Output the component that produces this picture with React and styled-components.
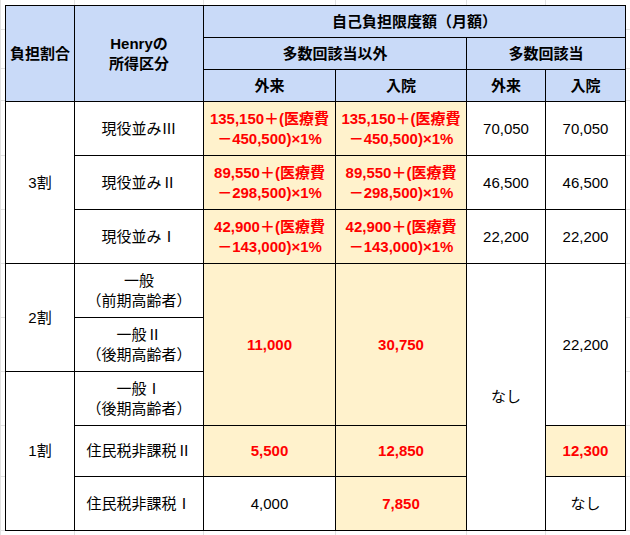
import styled, { createGlobalStyle } from 'styled-components';

const GlobalStyle = createGlobalStyle`
  html, body {
    margin: 0;
    padding: 0;
    background: #fff;
  }
  body {
    font-family: "Liberation Sans", Arial, "Noto Sans CJK JP", sans-serif;
  }
`;

const grid = '#e2e2e2';
const vLine = x => `linear-gradient(${grid}, ${grid}) ${x}px 0 / 1px 100% no-repeat`;
const hLine = y => `linear-gradient(${grid}, ${grid}) 0 ${y}px / 100% 1px no-repeat`;

const Sheet = styled.div`
  width: 630px;
  height: 535px;
  box-sizing: border-box;
  padding: 5px;
  background: ${[0, 74, 203, 335, 466, 545].map(vLine).join(', ')},
    ${[29, 68, 100, 155, 209, 263, 317, 371, 425, 476, 530].map(hLine).join(', ')};
`;

const Table = styled.table`
  width: 620px;
  border-collapse: collapse;
  table-layout: fixed;
  font-size: 15px;
  line-height: 20px;
  color: #000;
`;

const HeadRow = styled.tr`
  height: 32px;
`;

const Row = styled.tr`
  height: ${p => p.$h || 54}px;
`;

const HeadCell = styled.th`
  background: #c9daf8;
  border: 1px solid #000;
  font-weight: 700;
  text-align: center;
  vertical-align: middle;
  padding: 0 2px;
`;

const Cell = styled.td`
  background: ${p => (p.$yellow ? '#fff2cc' : '#fff')};
  color: ${p => (p.$red ? '#ff0000' : '#000')};
  font-weight: ${p => (p.$red ? 700 : 400)};
  border: 1px solid #000;
  text-align: center;
  vertical-align: middle;
  padding: 0 2px;
  white-space: nowrap;
`;

const widths = [69, 129, 132, 131, 79, 80];

const formula = (base, limit) => (
  <>
    {base}＋(医療費
    <br />
    －{limit})×1%
  </>
);

const upperRows = [
  { label: '現役並みⅢ', base: '135,150', limit: '450,500', cap: '70,050' },
  { label: '現役並みⅡ', base: '89,550', limit: '298,500', cap: '46,500' },
  { label: '現役並みⅠ', base: '42,900', limit: '143,000', cap: '22,200' },
];

const App = () => {
  return (
    <>
      <GlobalStyle />
      <Sheet>
        <Table>
          <colgroup>
            {widths.map((w, i) => (
              <col key={i} style={{ width: w }} />
            ))}
          </colgroup>
          <thead>
            <HeadRow>
              <HeadCell rowSpan={3}>負担割合</HeadCell>
              <HeadCell rowSpan={3}>
                Henryの
                <br />
                所得区分
              </HeadCell>
              <HeadCell colSpan={4}>自己負担限度額（月額）</HeadCell>
            </HeadRow>
            <HeadRow>
              <HeadCell colSpan={2}>多数回該当以外</HeadCell>
              <HeadCell colSpan={2}>多数回該当</HeadCell>
            </HeadRow>
            <HeadRow>
              <HeadCell>外来</HeadCell>
              <HeadCell>入院</HeadCell>
              <HeadCell>外来</HeadCell>
              <HeadCell>入院</HeadCell>
            </HeadRow>
          </thead>
          <tbody>
            {upperRows.map((r, i) => (
              <Row key={r.label}>
                {i === 0 && <Cell rowSpan={3}>3割</Cell>}
                <Cell>{r.label}</Cell>
                <Cell $yellow $red>{formula(r.base, r.limit)}</Cell>
                <Cell $yellow $red>{formula(r.base, r.limit)}</Cell>
                <Cell>{r.cap}</Cell>
                <Cell>{r.cap}</Cell>
              </Row>
            ))}
            <Row>
              <Cell rowSpan={2}>2割</Cell>
              <Cell>
                一般
                <br />
                （前期高齢者）
              </Cell>
              <Cell rowSpan={3} $yellow $red>11,000</Cell>
              <Cell rowSpan={3} $yellow $red>30,750</Cell>
              <Cell rowSpan={5}>なし</Cell>
              <Cell rowSpan={3}>22,200</Cell>
            </Row>
            <Row>
              <Cell>
                一般Ⅱ
                <br />
                （後期高齢者）
              </Cell>
            </Row>
            <Row>
              <Cell rowSpan={3}>1割</Cell>
              <Cell>
                一般Ⅰ
                <br />
                （後期高齢者）
              </Cell>
            </Row>
            <Row $h={51}>
              <Cell>住民税非課税Ⅱ</Cell>
              <Cell $yellow $red>5,500</Cell>
              <Cell $yellow $red>12,850</Cell>
              <Cell $yellow $red>12,300</Cell>
            </Row>
            <Row>
              <Cell>住民税非課税Ⅰ</Cell>
              <Cell>4,000</Cell>
              <Cell $yellow $red>7,850</Cell>
              <Cell>なし</Cell>
            </Row>
          </tbody>
        </Table>
      </Sheet>
    </>
  );
};

export default App;
